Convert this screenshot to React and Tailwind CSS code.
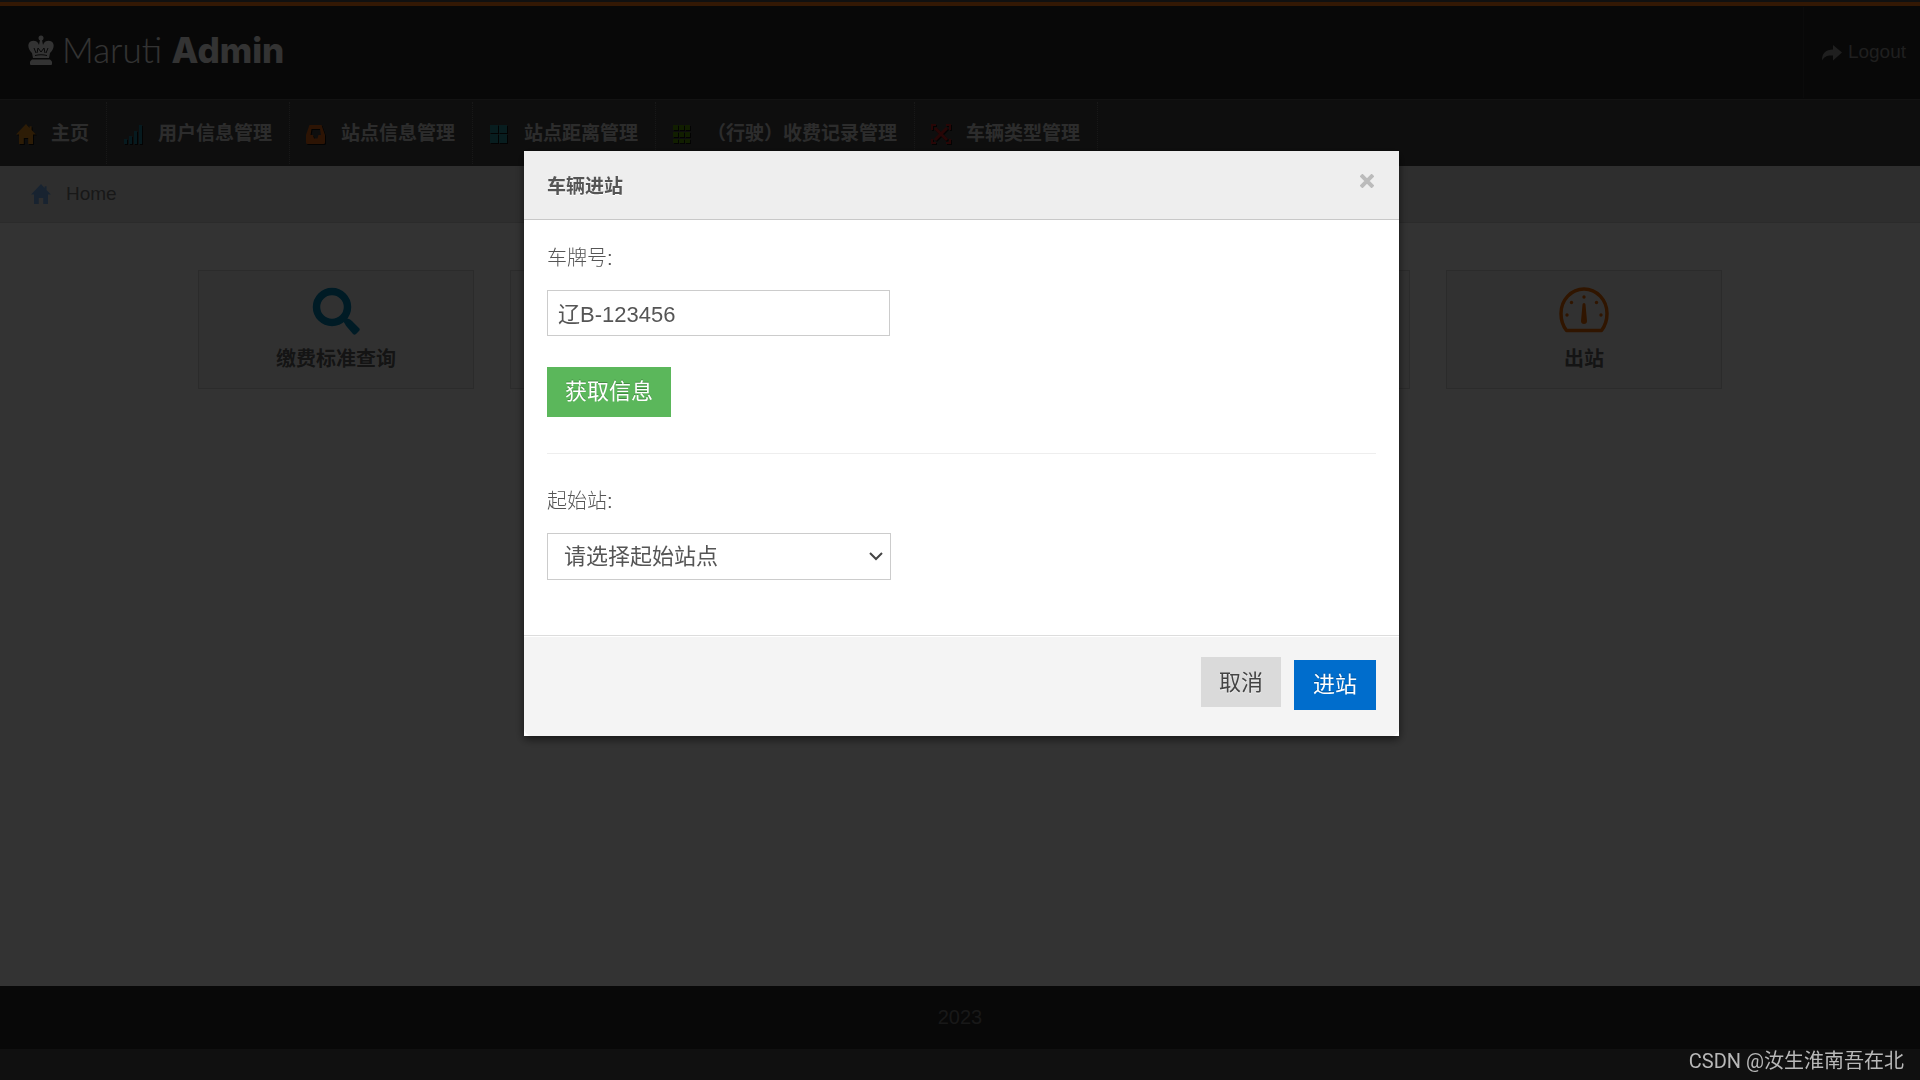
import React, { useState } from 'react';

const HomeIcon = ({ className }) => (
  <svg viewBox="0 0 20 20" className={className} fill="currentColor" aria-hidden="true">
    <path d="M10 0 0 10.5h3V20h4.8v-6h4.4v6H17v-9.5h3L15.6 6V2.2h-2v1.7z" />
  </svg>
);

const SignalIcon = ({ className }) => (
  <svg viewBox="0 0 20 20" className={className} fill="currentColor" aria-hidden="true">
    <path d="M1 15h3v5H1zM6 12h3v8H6zM11 7h3v13h-3zM16 1h3v19h-3z" />
  </svg>
);

const InboxIcon = ({ className }) => (
  <svg viewBox="0 0 20 20" className={className} fill="currentColor" aria-hidden="true">
    <path
      fillRule="evenodd"
      d="M3.5 1h12L19 11v7.500a1.500 1.500 0 0 1-1.500 1.500h-16A1.500 1.500 0 0 1 0 18.500V11zM5.500 5 4.500 11h2.500l1 3.500h3.500L12.500 11h2.500L14 5z"
    />
  </svg>
);

const GridLargeIcon = ({ className }) => (
  <svg viewBox="0 0 20 20" className={className} fill="currentColor" aria-hidden="true">
    <path d="M1 1h8v8H1zM10 1h8v8h-8zM1 10h8v9H1zM10 10h8v9h-8z" />
  </svg>
);

const GridIcon = ({ className }) => (
  <svg viewBox="0 0 20 20" className={className} fill="currentColor" aria-hidden="true">
    <path d="M1 1h5v5H1zM7 1h5v5H7zM13 1h5v5h-5zM1 8h5v5H1zM7 8h5v5H7zM13 8h5v5h-5zM1 15h5v4H1zM7 15h5v4H7zM13 15h5v4h-5z" />
  </svg>
);

const ExpandIcon = ({ className }) => (
  <svg viewBox="0 0 20 20" className={className} fill="none" stroke="currentColor" aria-hidden="true">
    <path strokeWidth="2" d="M1 6V1h4M15 1h4v5M19 15v4h-4M5 19H1v-4" />
    <path strokeWidth="3" d="M4 4l12 12M16 4 4 16" />
  </svg>
);

const KingIcon = ({ className }) => (
  <svg viewBox="0 0 26 30" className={className} aria-hidden="true">
    <g fill="currentColor">
      <circle cx="13" cy="3" r="2.500" />
      <path d="M12 5h2l1 5 1-2c2-3 7-3 9 0 2 4-1 8-3 10l-1 5H5l-1-5C2 16-1 12 1 8c2-3 7-3 9 0l1 2z" />
      <path d="M4 24.500h18l2 2V29a1 1 0 0 1-1 1H3a1 1 0 0 1-1-1v-2.500z" />
    </g>
    <path
      fill="none"
      stroke="#282828"
      strokeWidth="1"
      d="M8 18l-2-5M9 18l1-5 3 4 3-4 1 5M18 18l2-5M7 20.500c4-1 8-1 12 0"
    />
  </svg>
);

const ShareIcon = ({ className }) => (
  <svg viewBox="0 0 20 16" className={className} fill="currentColor" aria-hidden="true">
    <path d="M11 0l9 7.500-9 8v-5C6 10 2.500 11 0 15.500 0 8 4 4.500 11 4.500z" />
  </svg>
);

const SearchIcon = ({ className }) => (
  <svg viewBox="0 0 48 48" className={className} aria-hidden="true">
    <circle cx="20" cy="20" r="15.500" fill="none" stroke="currentColor" strokeWidth="7.500" />
    <path fill="currentColor" d="M31 34l3-3 3 1c1 .5 2 1 3 2l7 7c1 1 1 2 0 3l-3 3c-1 1-2 1-3 0l-6-7c-1-1-1.500-2-2-3z" />
  </svg>
);

const GaugeIcon = ({ className }) => (
  <svg viewBox="0 0 50 48" className={className} aria-hidden="true">
    <path
      fill="none"
      stroke="currentColor"
      strokeWidth="3.500"
      strokeLinejoin="round"
      d="M7.500 43.500C4 39 2 33.500 2 26.500a23 24.500 0 0 1 46 0c0 7-2 12.500-5.500 17z"
    />
    <path fill="currentColor" d="M23.500 17.500a1.500 1.500 0 0 1 3 0L28 34a3 3 0 0 1-6 0z" />
    <g fill="currentColor">
      <circle cx="25" cy="10" r="1.700" />
      <circle cx="12.500" cy="15.500" r="1.700" />
      <circle cx="37.500" cy="15.500" r="1.700" />
      <circle cx="8" cy="28" r="1.700" />
      <circle cx="42" cy="28" r="1.700" />
    </g>
  </svg>
);

const menu = [
  { label: '主页', Icon: HomeIcon, color: 'text-[#e08c20]' },
  { label: '用户信息管理', Icon: SignalIcon, color: 'text-[#1f8199]' },
  { label: '站点信息管理', Icon: InboxIcon, color: 'text-[#e06418]' },
  { label: '站点距离管理', Icon: GridLargeIcon, color: 'text-[#28909a]' },
  { label: '（行驶）收费记录管理', Icon: GridIcon, color: 'text-[#569400]' },
  { label: '车辆类型管理', Icon: ExpandIcon, color: 'text-[#c02020]' },
];

const shortcuts = [
  { label: '缴费标准查询', Icon: SearchIcon, color: 'text-[#0088bb]' },
  {},
  {},
  {},
  { label: '出站', Icon: GaugeIcon, color: 'text-[#ee6a00]' },
];

const Header = () => (
  <header className="flex h-[93px] items-stretch justify-between bg-[#282828]">
    <h1 className="flex items-center gap-2 pb-[6px] pl-7 text-white">
      <KingIcon className="h-[30px] w-[26px]" />
      <span className="font-[Lato,sans-serif] text-[35px] leading-none font-light">
        Maruti <b className="font-[Inter,sans-serif] font-extrabold">Admin</b>
      </span>
    </h1>
    <a
      href="#logout"
      className="my-px flex items-center gap-[6px] border-l border-[#3a3a3a] pr-[14px] pl-[18px] text-[19px] text-[#999]"
    >
      <ShareIcon className="h-4 w-5" />
      Logout
    </a>
  </header>
);

const Nav = () => (
  <nav className="border-t border-[#606060] bg-[#494949]">
    <ul className="flex h-[66px]">
      {menu.map(({ label, Icon, color }) => (
        <li key={label} className="my-[2px] border-r border-dotted border-[#777]">
          <a
            href="#menu"
            className="flex h-full items-center gap-[15px] pt-[2px] pr-[17px] pl-4 text-[19px] font-bold whitespace-nowrap text-[#ddd]"
          >
            <Icon className={`h-5 w-5 drop-shadow-[1px_1px_0_#111] ${color}`} />
            {label}
          </a>
        </li>
      ))}
    </ul>
  </nav>
);

const Shortcuts = () => (
  <ul className="flex justify-center gap-9 pt-[47px]">
    {shortcuts.map(({ label, Icon, color }, index) => (
      <li key={index} className="h-[119px] w-[276px] border border-[#d5d5d5] bg-[#f6f6f6]">
        {label && (
          <a
            href="#shortcut"
            className="flex h-full flex-col items-center gap-[10px] pt-4 text-xl font-bold text-[#666]"
          >
            <Icon className={`h-12 w-[50px] ${color}`} />
            {label}
          </a>
        )}
      </li>
    ))}
  </ul>
);

const EntryModal = () => {
  const [plate, setPlate] = useState('辽B-123456');

  return (
    <div
      role="dialog"
      aria-labelledby="entry-title"
      className="fixed top-[151px] left-1/2 -ml-[436px] w-[875px] bg-white text-[#555] shadow-[0_3px_9px_rgba(0,0,0,0.6)]"
    >
      <div className="flex h-[69px] items-center justify-between border-b border-[#c8c8c8] bg-[#eee] px-[23px] pt-1">
        <h3 id="entry-title" className="text-[19px] font-bold text-shadow-[0_1px_0_#fff]">
          车辆进站
        </h3>
        <button type="button" aria-label="关闭" className="mb-3 p-[2px] text-[#bbb]">
          <svg viewBox="0 0 14 14" className="h-[14px] w-[14px]" fill="none" stroke="currentColor" strokeWidth="4">
            <path d="M1 1l12 12M13 1 1 13" />
          </svg>
        </button>
      </div>

      <form className="flex flex-col items-start px-[23px] pt-6 pb-[55px]">
        <label htmlFor="plate" className="text-xl leading-7 font-light">
          车牌号:
        </label>
        <input
          id="plate"
          type="text"
          value={plate}
          onChange={(e) => setPlate(e.target.value)}
          className="mt-[18px] h-[46px] w-[343px] border border-[#ccc] px-[10px] pb-[3px] text-[22px]"
        />
        <button
          type="button"
          className="mt-[31px] h-[50px] bg-[#5bb75b] px-[18px] pb-[2px] text-[22px] text-white text-shadow-[0_-1px_0_rgba(0,0,0,0.25)]"
        >
          获取信息
        </button>
        <hr className="mt-9 mb-[33px] w-full border-[#eee]" />
        <label htmlFor="station" className="text-xl leading-7 font-light">
          起始站:
        </label>
        <div className="relative mt-[18px] w-[344px]">
          <select
            id="station"
            className="h-[47px] w-full appearance-none border border-[#ccc] bg-white px-4 text-[22px]"
          >
            <option>请选择起始站点</option>
          </select>
          <svg
            viewBox="0 0 14 9"
            className="pointer-events-none absolute top-[19px] right-2 h-[9px] w-[14px]"
            fill="none"
            stroke="#444"
            strokeWidth="2"
            aria-hidden="true"
          >
            <path d="M1 1l6 6 6-6" />
          </svg>
        </div>
      </form>

      <div className="border-t border-[#ddd] pt-px">
        <div className="flex h-[99px] gap-[13px] rounded-b-lg bg-[#f4f4f4] px-[23px] pt-5 pb-[26px]">
          <button
            type="button"
            className="ml-auto h-[50px] self-start bg-[#dadada] px-[18px] text-[22px] text-[#444] text-shadow-[0_1px_1px_rgba(255,255,255,0.75)]"
          >
            取消
          </button>
          <button
            type="button"
            className="h-[50px] self-end bg-[#006dcc] px-[19px] pb-[2px] text-[22px] text-white text-shadow-[0_-1px_0_rgba(0,0,0,0.25)]"
          >
            进站
          </button>
        </div>
      </div>
    </div>
  );
};

const App = () => {
  return (
    <div
      lang="zh-CN"
      className="flex min-h-screen flex-col bg-[#505050] font-['Liberation_Sans','Noto_Sans_CJK_SC',sans-serif]"
    >
      <div className="mt-[2px] h-1 bg-[#ff7818]" />
      <Header />
      <Nav />
      <main className="flex-1 bg-white">
        <div className="flex h-[57px] items-center border-b border-[#d4d4d4] bg-[#e6e6e6] pl-[31px]">
          <a href="#home" className="flex items-center gap-[15px] text-[19px] text-[#777]">
            <HomeIcon className="h-5 w-5 text-[#7ab0ee]" />
            Home
          </a>
        </div>
        <Shortcuts />
      </main>
      <footer className="mb-[31px] flex h-[63px] items-center justify-center bg-[#282828] pb-[2px] text-xl text-[#777]">
        2023
      </footer>

      <div className="fixed inset-0 bg-black/80" />
      <EntryModal />
      <p className="fixed right-4 bottom-[5px] font-[Roboto,'Noto_Sans_CJK_SC',sans-serif] text-xl text-[#b8b8b8]">
        CSDN @汝生淮南吾在北
      </p>
    </div>
  );
};

export default App;
